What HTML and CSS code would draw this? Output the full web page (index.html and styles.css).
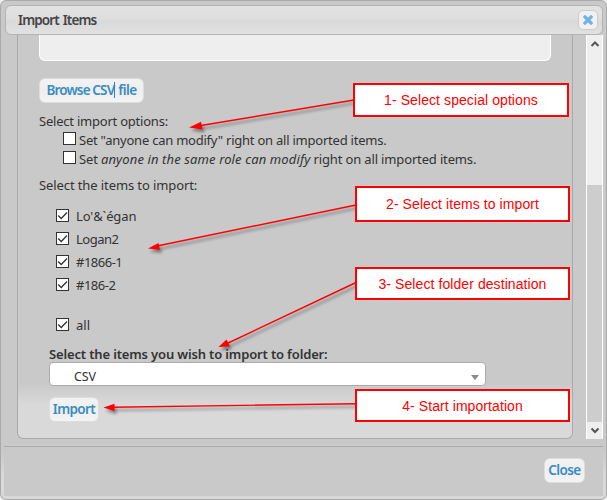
FILE: index.html
```html
<!DOCTYPE html>
<html lang="en">
<head>
<meta charset="utf-8">
<title>Import Items</title>
<link rel="stylesheet" href="styles.css">
</head>
<body>
<div class="dialog">
  <header class="titlebar">
    <h1>Import Items</h1>
    <button class="close-icon" aria-label="Close"><svg width="10" height="10" viewBox="0 0 10 10"><path d="M2 2L8 8M8 2L2 8" stroke="#6fb2e3" stroke-width="3.2" stroke-linecap="square"/></svg></button>
  </header>
  <div class="viewport">
    <main class="panel">
      <div class="filebox"></div>
      <button class="btn browse"><span class="t-browse">Browse CSV</span><i class="caret"></i><span class="t-file">file</span></button>
      <p class="heading options-title"><span class="t-options">Select import options:</span></p>
      <label class="option"><i class="box"></i><span class="t-opt1">Set "anyone can modify" right on all imported items.</span></label>
      <label class="option"><i class="box"></i><span class="t-opt2">Set <em>anyone in the same role can modify</em> right on all imported items.</span></label>
      <p class="heading items-title"><span class="t-items">Select the items to import:</span></p>
      <div class="items">
        <label class="item"><i class="box"><svg width="11" height="11" viewBox="0 0 11 11"><path d="M1.2 5.5L4.2 8.5L10 2.5"/></svg></i><span class="t-i1">Lo'&amp;`égan</span></label>
        <label class="item"><i class="box"><svg width="11" height="11" viewBox="0 0 11 11"><path d="M1.2 5.5L4.2 8.5L10 2.5"/></svg></i><span class="t-i2">Logan2</span></label>
        <label class="item"><i class="box"><svg width="11" height="11" viewBox="0 0 11 11"><path d="M1.2 5.5L4.2 8.5L10 2.5"/></svg></i><span class="t-i2">#1866-1</span></label>
        <label class="item"><i class="box"><svg width="11" height="11" viewBox="0 0 11 11"><path d="M1.2 5.5L4.2 8.5L10 2.5"/></svg></i><span class="t-i2">#186-2</span></label>
        <label class="item all"><i class="box"><svg width="11" height="11" viewBox="0 0 11 11"><path d="M1.2 5.5L4.2 8.5L10 2.5"/></svg></i><span>all</span></label>
      </div>
      <p class="folder-title"><span class="t-folder">Select the items you wish to import to folder:</span></p>
      <div class="select"><span>CSV</span><svg width="8" height="5" viewBox="0 0 8 5"><path d="M0 0H8L4 5Z" fill="#888"/></svg></div>
      <button class="btn import"><span class="t-import">Import</span></button>
    </main>
    <div class="scrollbar">
      <svg width="15" height="17" viewBox="0 0 15 17"><path d="M4.5 11L8 7.5L11.5 11" fill="none" stroke="#555" stroke-width="2"/></svg>
      <div class="thumb"></div>
      <svg width="15" height="17" viewBox="0 0 15 17"><path d="M4.5 6.5L8 10L11.5 6.5" fill="none" stroke="#555" stroke-width="2"/></svg>
    </div>
  </div>
  <footer class="footer"><button class="btn close"><span class="t-close">Close</span></button></footer>
</div>
<svg class="arrows" width="607" height="500" viewBox="0 0 607 500">
  <g stroke="#f00" stroke-width="1.4">
    <path d="M354 100L198 126"/>
    <path d="M356 205L157 246"/>
    <path d="M356 282.5L226 344"/>
    <path d="M357 403.7L112 407.2"/>
  </g>
  <g fill="#f00">
    <path d="M189 127.5L201 121.8L202.5 129.5Z"/>
    <path d="M148 248.5L158.5 243L160 250Z"/>
    <path d="M218.5 347L226.5 339.5L230 346.5Z"/>
    <path d="M103.5 407.5L114.5 403.8V411.3Z"/>
  </g>
</svg>
<div class="callout c1"><span>1- Select special options</span></div>
<div class="callout c2"><span>2- Select items to import</span></div>
<div class="callout c3"><span>3- Select folder destination</span></div>
<div class="callout c4"><span>4- Start importation</span></div>
</body>
</html>
```
FILE: styles.css
```css
* { box-sizing: border-box; }
body { margin: 0; width: 607px; height: 500px; overflow: hidden; background: #eee; font: 13px/18px "Noto Sans", "Open Sans", sans-serif; color: #333; position: relative; }
h1, p { margin: 0; }
span { white-space: nowrap; }
.dialog { width: 607px; height: 500px; border: 1px solid #aaa; border-radius: 6px; padding: 4px 3px 3px; background: linear-gradient(#c9c9c9 450px, #d9d9d9 475px); display: flex; flex-direction: column; }
.titlebar { height: 30px; flex: none; margin: 0 0 0 1px; border: 1px solid #b4b4b4; border-radius: 6px; padding: 0 4px 0 12px; background: linear-gradient(#e3e3e3, #dddddd 50%, #d9d9d9 51%, #e1e1e1); display: flex; align-items: center; justify-content: space-between; }
h1 { font-size: 13.5px; line-height: 18px; font-weight: 600; letter-spacing: -0.85px; word-spacing: 1px; color: #444; margin-top: -1px; }
.close-icon { width: 20px; height: 20px; border: 1px solid #ccc; border-radius: 5px; background: #f1f1f1; padding: 0; display: grid; place-items: center; }
.viewport { height: 411px; flex: none; background: #c9c9c9; display: flex; justify-content: space-between; align-items: flex-start; padding-left: 13px; }
.panel { width: 556px; height: 404px; border: 1px solid #aaa; border-top: 0; border-radius: 0 0 6px 6px; padding: 0 21px; background: linear-gradient(#c9c9c9 348px, #d9d9d9 370px); display: flex; flex-direction: column; align-items: flex-start; }
.filebox { width: 512px; height: 26px; flex: none; background: #eee; border: 1px solid #fff; border-top: 0; border-radius: 0 0 6px 6px; }
.btn { font: 600 13.5px/18px "Noto Sans", sans-serif; letter-spacing: -0.6px; color: #3a8cc4; border: 1px solid #ddd; border-radius: 6px; background: linear-gradient(#f3f3f3, #eee 50%, #f4f4f4); padding: 0 0 1px; display: flex; align-items: center; justify-content: center; flex: none; }
.browse { width: 105px; height: 25px; margin-top: 17px; }
.t-browse { letter-spacing: -0.85px; }
.caret { width: 1px; height: 16px; background: #2e83bd; margin-right: 3px; }
.heading { height: 18px; }
.options-title { margin-top: 9px; }
.t-options { letter-spacing: -0.22px; }
.t-opt1 { letter-spacing: -0.23px; }
.t-opt2 { letter-spacing: -0.15px; }
.t-opt2 em { letter-spacing: 0.12px; }
.t-items { letter-spacing: -0.1px; }
.t-i1 { letter-spacing: -0.1px; }
.t-i2 { letter-spacing: -0.5px; }
.option { height: 19px; display: flex; align-items: center; margin-left: 24px; gap: 3px; }
.option .box { transform: translateY(-1px); }
.box { width: 13px; height: 13px; flex: none; border: 1px solid #333; background: #fff; display: block; }
.box svg { display: block; fill: none; stroke: #333; stroke-width: 1.3; }
.items-title { margin-top: 8px; }
.items { margin: 10px 0 0 17px; }
.item { height: 23px; display: flex; align-items: center; gap: 7px; }
.item.all { margin-top: 17px; }
.folder-title { height: 18px; margin: 9px 0 0 10px; font-weight: 600; letter-spacing: -0.15px; }
.select { width: 437px; height: 24px; margin: -1px 0 0 10px; border: 1px solid #aaa; border-radius: 4px; background: #fff; padding: 6px 6px 0 24px; display: flex; align-items: center; justify-content: space-between; font-size: 12.5px; letter-spacing: -0.1px; flex: none; }
.import { width: 50px; height: 25px; margin: 11px 0 0 10px; }
.scrollbar { width: 17px; height: 404px; border: 1px solid #fff; border-width: 0 1px; background: #efefef; display: flex; flex-direction: column; }
.scrollbar svg { display: block; flex: none; }
.thumb { height: 237px; margin-top: auto; background: #cdcdcd; flex: none; }
.footer { flex: 1; border-top: 1px solid #aaa; background: #c9c9c9; padding: 11px 18px 0 0; display: flex; justify-content: flex-end; align-items: flex-start; }
.close { width: 41px; height: 25px; }
.arrows { position: absolute; left: 0; top: 0; filter: drop-shadow(2px 3px 1.5px rgba(0,0,0,.4)); }
.callout { position: absolute; border: 2px solid #f00; background: #fff; color: #f00; font: 14px/18px "Liberation Sans", Arial, sans-serif; letter-spacing: 0.08px; display: flex; align-items: center; justify-content: center; }
.c1 { left: 353px; top: 83px; width: 216px; height: 34px; }
.c2 { left: 355px; top: 186px; width: 215px; height: 36px; }
.c3 { left: 355px; top: 267px; width: 215px; height: 33px; }
.c4 { left: 355px; top: 389px; width: 215px; height: 33px; }
```
